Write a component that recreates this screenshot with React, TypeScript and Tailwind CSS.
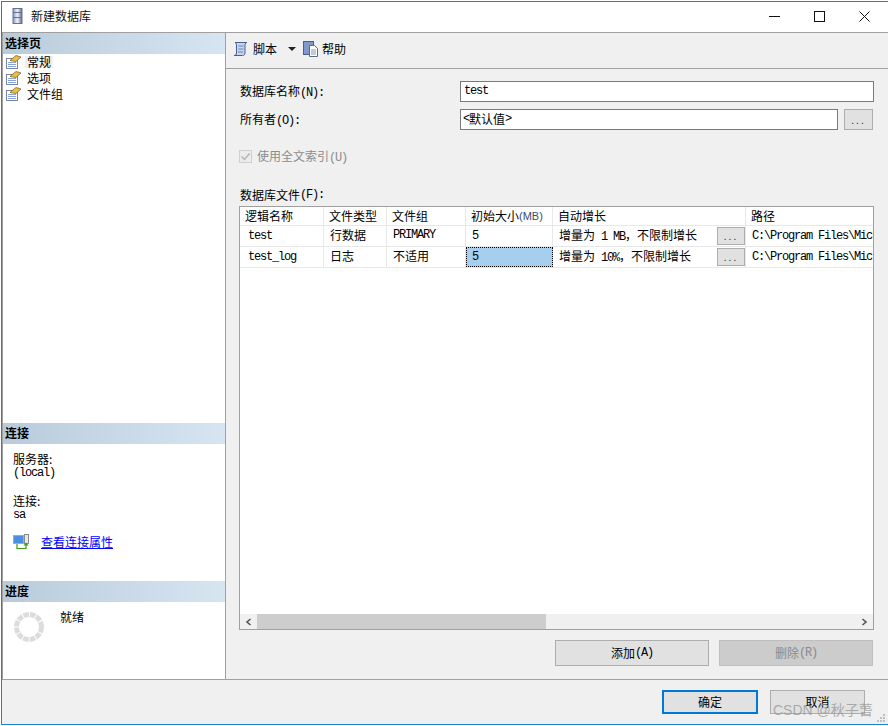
import React from "react";

const cjk = "font-['Noto_Sans_CJK_SC','Liberation_Sans',sans-serif]";
const mono = "font-['Liberation_Mono','Noto_Sans_CJK_SC',monospace] tracking-[-1.2px]";

function Latin({ children }: { children: React.ReactNode }) {
  return <span className={mono}>{children}</span>;
}

function PageIcon() {
  return (
    <svg width="16" height="14" viewBox="0 0 16 14" className="shrink-0">
      <rect x="0.5" y="3.5" width="11" height="10" fill="#fff" stroke="#76869f" />
      <path d="M2 7.5h8M2 9.5h8M2 11.5h8" stroke="#8aa4d6" />
      <path d="M4 5.5l6-5 5 1.5-5 4.5z" fill="#efbd45" stroke="#6f5a1c" strokeWidth="0.7" />
    </svg>
  );
}

function SectionHead({ children }: { children: React.ReactNode }) {
  return (
    <div className="h-[21px] shrink-0 flex items-center pl-[2px] pb-[2px] bg-gradient-to-r from-[#b9cbdb] to-[#d7e5f2] text-[12px] font-bold text-black leading-none">
      {children}
    </div>
  );
}

function Dots({ className }: { className: string }) {
  return (
    <button className={`flex items-center justify-center bg-[#e1e1e1] border border-[#adadad] text-[10px] leading-none tracking-[2px] text-[#333] ${className}`}>
      ...
    </button>
  );
}

const colWidths = "grid grid-cols-[84px_63px_79px_87px_193px_1fr]";
const cell = "border-r border-[#e8e8e8] flex items-center overflow-hidden whitespace-nowrap";

function Row({ name, kind, group, size, growth, selected }: { name: string; kind: string; group: React.ReactNode; size: string; growth: React.ReactNode; selected?: boolean }) {
  return (
    <div className={`${colWidths} h-[21px] border-b border-[#e8e8e8] text-[12px]`}>
      <div className={`${cell} pl-2`}><Latin>{name}</Latin></div>
      <div className={`${cell} pl-[6px] pb-[2px]`}>{kind}</div>
      <div className={`${cell} pl-[6px] pb-[2px]`}>{group}</div>
      <div className={selected ? "bg-[#a6cfef] outline-1 outline-dotted outline-black -outline-offset-1 flex items-center pl-[6px]" : `${cell} pl-[6px]`}>
        <Latin>{size}</Latin>
      </div>
      <div className={`${cell} pl-[6px] justify-between`}>
        <span className="whitespace-pre">{growth}</span>
        <Dots className="w-7 h-[18px]" />
      </div>
      <div className="flex items-center pl-[6px] overflow-hidden whitespace-nowrap"><Latin>C:\Program Files\Micr</Latin></div>
    </div>
  );
}

export default function App() {
  return (
    <div className={`relative w-[888px] h-[726px] overflow-hidden bg-white text-[12px] text-black ${cjk}`}>
      <div className="mt-px ml-px h-[724px] border border-[#1883d7] border-r-0 flex flex-col bg-[#f0f0f0]">
        {/* title bar */}
        <div className="h-[31px] bg-white flex items-center pb-[2px] shrink-0 border-b border-[#a0a0a0]">
          <svg width="11" height="16" viewBox="0 0 11 16" className="ml-[10px] mr-[8px]">
            <defs>
              <linearGradient id="db" x1="0" x2="1">
                <stop offset="0" stopColor="#8a9cc8" />
                <stop offset="0.5" stopColor="#eef1f8" />
                <stop offset="1" stopColor="#5c6c94" />
              </linearGradient>
            </defs>
            <rect x="1" y="0.5" width="9" height="15" fill="url(#db)" stroke="#68718c" />
            <path d="M1 4.5h9M1 9.5h9" stroke="#68718c" />
          </svg>
          <span className="text-[12px] text-[#111]">新建数据库</span>
          <div className="ml-auto flex items-center pr-[18px] gap-[34px]">
            <svg width="11" height="11" viewBox="0 0 11 11"><path d="M0 5.5h11" stroke="#111" /></svg>
            <svg width="11" height="11" viewBox="0 0 11 11"><rect x="0.5" y="0.5" width="10" height="10" fill="none" stroke="#111" /></svg>
            <svg width="11" height="11" viewBox="0 0 11 11"><path d="M0.5 0.5l10 10M10.5 0.5l-10 10" stroke="#111" /></svg>
          </div>
        </div>

        <div className="flex-1 flex min-h-0">
          {/* left panel */}
          <div className="w-[224px] shrink-0 bg-white border-l border-r border-[#a0a0a0] flex flex-col">
            <SectionHead>选择页</SectionHead>
            <div className="h-[369px] pl-[3px] flex flex-col">
              {["常规", "选项", "文件组"].map((t, i) => (
                <div key={t} className="h-4 flex items-center leading-none">
                  <PageIcon />
                  <span className={i === 0 ? "ml-[3px] px-[2px] bg-[#f0f0f0]" : "ml-[3px] px-[2px]"}>{t}</span>
                </div>
              ))}
            </div>
            <SectionHead>连接</SectionHead>
            <div className="h-[137px] pl-[10px] pt-[8px] flex flex-col">
              <div className="h-[13px] leading-[13px]">服务器:</div>
              <div className="h-[11px] leading-[11px]"><Latin>(local)</Latin></div>
              <div className="h-[13px] leading-[13px] mt-[18px]">连接:</div>
              <div className="h-[12px] leading-[12px]"><Latin>sa</Latin></div>
              <div className="flex items-center gap-[12px] mt-[15px]">
                <svg width="16" height="16" viewBox="0 0 16 16">
                  <rect x="0.5" y="1.5" width="10" height="8" fill="#4a8fe0" stroke="#a0abbd" />
                  <rect x="11.5" y="0.5" width="4" height="9" fill="#e8e8e8" stroke="#8a8a8a" />
                  <path d="M4 10v4.5h9V11" fill="none" stroke="#3c9b14" strokeWidth="1.2" />
                  <path d="M10.5 11.5l2.5-3 2.5 3z" fill="#3c9b14" />
                </svg>
                <a className="text-[#0000ff] underline leading-none">查看连接属性</a>
              </div>
            </div>
            <SectionHead>进度</SectionHead>
            <div className="flex-1 flex pl-[11px] pt-[10px]">
              <svg width="30" height="30" viewBox="0 0 30 30">
                <circle cx="15" cy="15" r="12.5" fill="none" stroke="#dcdcdc" strokeWidth="5" strokeDasharray="5.6 1" />
              </svg>
              <span className="ml-4 leading-none -mt-[1px]">就绪</span>
            </div>
          </div>

          {/* right panel */}
          <div className="flex-1 flex flex-col min-w-0">
            <div className="h-[36px] border-b border-[#a0a0a0] flex items-center pl-[7px] pb-[3px] shrink-0">
              <svg width="16" height="16" viewBox="0 0 16 16">
                <path d="M3 1.5h11c-1 0-2 1-2 2.5v8c0 1.5-1 2.5-2.5 2.5H1c1.5 0 2.5-1 2.5-2.5V4C3.5 3 3 2 2 1.5z" fill="#c5d5ee" stroke="#46608f" />
                <path d="M5.5 5h5M5.5 8h5M5 11h5" stroke="#6d85b3" />
              </svg>
              <span className="ml-[4px]">脚本</span>
              <svg width="8" height="4" viewBox="0 0 8 4" className="ml-[11px]"><path d="M0 0h8L4 4z" fill="#222" /></svg>
              <svg width="16" height="16" viewBox="0 0 16 16" className="ml-[7px]">
                <rect x="0.5" y="0.5" width="10" height="13" fill="#8098cb" stroke="#46608f" />
                <path d="M6.5 4.5h5l3 3v8h-8z" fill="#fff" stroke="#5b6a88" />
                <path d="M8 9h5M8 11h5M8 13h5" stroke="#8a97ad" />
              </svg>
              <span className="ml-[3px]">帮助</span>
            </div>

            <div className="flex-1 flex flex-col pl-[13px] pr-[14px] min-h-0">
              <div className="flex items-center mt-[12px] h-[21px]">
                <span className="w-[221px] pl-px">数据库名称<Latin>(N):</Latin></span>
                <div className="flex-1 h-[21px] bg-white border border-[#7a7a7a] flex items-center pl-[3px] pb-px"><Latin>test</Latin></div>
              </div>
              <div className="flex items-center mt-[7px] h-[21px]">
                <span className="w-[221px] pl-px">所有者<Latin>(O):</Latin></span>
                <div className="w-[378px] h-[21px] bg-white border border-[#7a7a7a] flex items-center pl-[2px] pb-[2px] leading-none"><Latin>&lt;</Latin>默认值<Latin>&gt;</Latin></div>
                <Dots className="w-[29px] h-[21px] ml-[6px]" />
              </div>
              <div className="flex items-center mt-[20px] h-[13px] text-[#8c8c8c]">
                <span className="w-[13px] h-[13px] border border-[#cfcfcf] bg-[#ececec] flex items-center justify-center">
                  <svg width="11" height="11" viewBox="0 0 11 11"><path d="M1.5 5.5l3 3 5-6" fill="none" stroke="#b5b5b5" strokeWidth="1.5" /></svg>
                </span>
                <span className="ml-[5px]">使用全文索引<Latin>(U)</Latin></span>
              </div>
              <div className="mt-[23px] h-[17px] pl-px flex items-center">数据库文件<Latin>(F):</Latin></div>

              {/* data grid */}
              <div className="mt-[3px] h-[424px] border border-[#a0a0a0] bg-white flex flex-col">
                <div className={`${colWidths} h-[18px] border-b border-[#e8e8e8] box-content`}>
                  <div className={`${cell} pl-[5px]`}>逻辑名称</div>
                  <div className={`${cell} pl-[5px]`}>文件类型</div>
                  <div className={`${cell} pl-[5px]`}>文件组</div>
                  <div className={`${cell} pl-[5px]`}>初始大小<span className="text-[11px] font-['Liberation_Sans'] text-[#3b4a6b]">(MB)</span></div>
                  <div className={`${cell} pl-[5px]`}>自动增长</div>
                  <div className="flex items-center pl-[5px]">路径</div>
                </div>
                <Row name="test" kind="行数据" group={<Latin>PRIMARY</Latin>} size="5" growth={<>增量为<Latin> 1 MB</Latin>，不限制增长</>} />
                <Row name="test_log" kind="日志" group="不适用" size="5" selected growth={<>增量为<Latin> 10%</Latin>，不限制增长</>} />
                <div className="flex-1" />
                <div className="h-[15px] bg-[#f0f0f0] flex items-center">
                  <div className="w-[17px] flex justify-center">
                    <svg width="7" height="8" viewBox="0 0 7 8"><path d="M5.5 1L2 4l3.5 3" fill="none" stroke="#555" strokeWidth="1.6" /></svg>
                  </div>
                  <div className="w-[289px] h-full bg-[#cdcdcd]" />
                  <div className="ml-auto w-[17px] flex justify-center">
                    <svg width="7" height="8" viewBox="0 0 7 8"><path d="M1.5 1L5 4 1.5 7" fill="none" stroke="#555" strokeWidth="1.6" /></svg>
                  </div>
                </div>
              </div>

              <div className="flex justify-end gap-[10px] mt-[10px] mr-px">
                <button className="w-[154px] h-[26px] bg-[#e1e1e1] border border-[#adadad] flex items-center justify-center leading-none">添加<Latin>(A)</Latin></button>
                <button className="w-[154px] h-[26px] bg-[#cccccc] border border-[#bfbfbf] text-[#8a8a8a] flex items-center justify-center leading-none">删除<Latin>(R)</Latin></button>
              </div>
            </div>
          </div>
        </div>

        {/* footer */}
        <div className="h-[45px] border-t border-[#a0a0a0] shrink-0 flex items-center justify-end gap-[12px] pr-[23px]">
          <button className="w-[96px] h-[24px] bg-[#e1e1e1] border-2 border-[#0078d7] flex items-center justify-center leading-none">确定</button>
          <button className="w-[95px] h-[24px] bg-[#e1e1e1] border border-[#adadad] flex items-center justify-center leading-none">取消</button>
        </div>
      </div>

      {/* resize grip */}
      <svg width="9" height="9" viewBox="0 0 9 9" className="absolute left-[877px] top-[714px]">
        <path d="M6 0h2v2H6zM3 3h2v2H3zM6 3h2v2H6zM0 6h2v2H0zM3 6h2v2H3zM6 6h2v2H6z" fill="#bdbdbd" />
      </svg>

      {/* watermark */}
      <div className="absolute left-[773px] top-[701px] text-[14px] leading-[18px] text-[#9a9a9a]/80 font-['Liberation_Sans','Noto_Sans_CJK_SC',sans-serif] whitespace-nowrap">
        CSDN @秋子萅
      </div>
    </div>
  );
}
